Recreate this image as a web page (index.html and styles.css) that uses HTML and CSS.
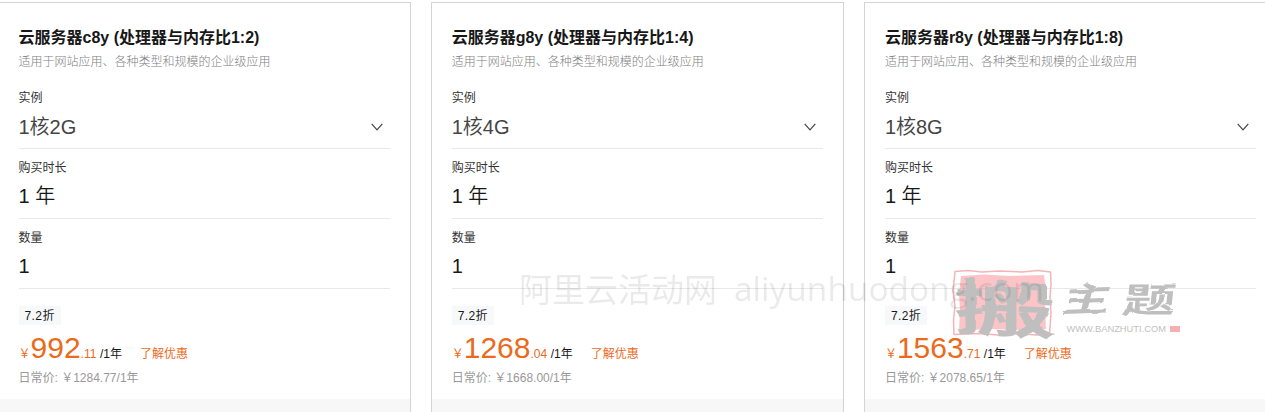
FILE: index.html
```html
<!DOCTYPE html>
<html lang="zh-CN">
<head>
<meta charset="utf-8">
<title>云服务器</title>
<link rel="stylesheet" href="styles.css">
</head>
<body>
<main class="cards">
  <section class="card">
    <div class="card-body">
      <h2 class="title">云服务器c8y (处理器与内存比1:2)</h2>
      <p class="desc">适用于网站应用、各种类型和规模的企业级应用</p>
      <div class="field"><span class="label">实例</span><div class="value select"><span>1核2G</span><svg class="chevron" viewBox="0 0 12 8"><path d="M.7 .8 6 6.8 11.3 .8"/></svg></div></div>
      <div class="field"><span class="label">购买时长</span><div class="value">1 年</div></div>
      <div class="field"><span class="label">数量</span><div class="value">1</div></div>
      <span class="tag">7.2折</span>
      <div class="price"><span class="money">￥<b class="amount">992</b>.11</span><span class="unit">/1年</span><a class="link">了解优惠</a></div>
      <div class="daily">日常价: ￥1284.77/1年</div>
    </div>
    <div class="card-foot"></div>
  </section>
  <section class="card">
    <div class="card-body">
      <h2 class="title">云服务器g8y (处理器与内存比1:4)</h2>
      <p class="desc">适用于网站应用、各种类型和规模的企业级应用</p>
      <div class="field"><span class="label">实例</span><div class="value select"><span>1核4G</span><svg class="chevron" viewBox="0 0 12 8"><path d="M.7 .8 6 6.8 11.3 .8"/></svg></div></div>
      <div class="field"><span class="label">购买时长</span><div class="value">1 年</div></div>
      <div class="field"><span class="label">数量</span><div class="value">1</div></div>
      <span class="tag">7.2折</span>
      <div class="price"><span class="money">￥<b class="amount">1268</b>.04</span><span class="unit">/1年</span><a class="link">了解优惠</a></div>
      <div class="daily">日常价: ￥1668.00/1年</div>
    </div>
    <div class="card-foot"></div>
  </section>
  <section class="card">
    <div class="card-body">
      <h2 class="title">云服务器r8y (处理器与内存比1:8)</h2>
      <p class="desc">适用于网站应用、各种类型和规模的企业级应用</p>
      <div class="field"><span class="label">实例</span><div class="value select"><span>1核8G</span><svg class="chevron" viewBox="0 0 12 8"><path d="M.7 .8 6 6.8 11.3 .8"/></svg></div></div>
      <div class="field"><span class="label">购买时长</span><div class="value">1 年</div></div>
      <div class="field"><span class="label">数量</span><div class="value">1</div></div>
      <span class="tag">7.2折</span>
      <div class="price"><span class="money">￥<b class="amount">1563</b>.71</span><span class="unit">/1年</span><a class="link">了解优惠</a></div>
      <div class="daily">日常价: ￥2078.65/1年</div>
    </div>
    <div class="card-foot"></div>
  </section>
</main>
<svg class="watermark" viewBox="0 0 1265 412">
  <defs>
    <filter id="rough" x="-10%" y="-10%" width="120%" height="120%">
      <feTurbulence type="fractalNoise" baseFrequency=".06" numOctaves="1" seed="4"/>
      <feDisplacementMap in="SourceGraphic" scale="5" xChannelSelector="R" yChannelSelector="G"/>
    </filter>
  </defs>
  <g class="wm-seal">
    <path class="seal-edge" d="M955 271.500 968 270.500 982 272 1000 271 1022 272 1038 270.500 1050.500 272 1051 284 1050 298 1051 313 1049.500 334 1037 335 1016 333.500 998 335 978 333.500 954 334.500 953.500 320 955 306 953 291Z"/>
    <path class="seal-fill" d="M961 276 984 274.500 1010 276 1044 275 1046 290 1045 306 1046 329 1020 330 990 329 959 330.500 960 311 959 294Z"/>
  </g>
  <g class="wm-brand">
    <g filter="url(#rough)">
      <text class="brush" transform="translate(954 329) skewY(3) scale(1.68 1)" font-size="61">搬</text>
      <text class="brush" transform="translate(1060 312) skewX(-14) skewY(-2) scale(1.4 1)" font-size="34">主</text>
      <text class="brush" transform="translate(1122 312) skewX(-6) scale(1.55 1)" font-size="34">题</text>
    </g>
    <text class="url" x="1066.500" y="332" font-size="9.300" textLength="99.500" lengthAdjust="spacingAndGlyphs">WWW.BANZHUTI.COM</text>
  </g>
  <rect class="wm-mark" x="1170" y="326" width="10" height="6"/>
  <g class="wm-site">
    <text x="519" y="302" font-size="33" textLength="198">阿里云活动网</text>
    <text x="734" y="301" font-size="32" textLength="310" lengthAdjust="spacingAndGlyphs">aliyunhuodong.com</text>
  </g>
</svg>
</body>
</html>
```

FILE: styles.css
```css
body {
  margin: 0;
  height: 412px;
  overflow: hidden;
  background: #fff;
  color: #181818;
  font: 12px/18px "Liberation Sans", "Noto Sans CJK SC", sans-serif;
}
.cards {
  display: grid;
  grid-template-columns: repeat(3, 413px);
  column-gap: 20.200px;
  width: 1280px;
  margin: 0 0 0 -2px;
  padding-top: 2px;
}
.card {
  box-sizing: border-box;
  height: 420px;
  border: 1px solid #d4d4d4;
}
.card-body {
  box-sizing: border-box;
  height: 396px;
  padding: 24px 20.500px 0 19.500px;
}
.title {
  margin: 0;
  font-size: 16px;
  line-height: 22px;
  font-weight: 700;
  white-space: nowrap;
}
.desc {
  margin: 0 0 7px;
  padding-top: 3px;
  line-height: 20px;
  color: #808080;
  font-weight: 300;
}
.field {
  box-sizing: border-box;
  height: 70px;
  padding-top: 10px;
  border-bottom: 1px solid #e8e8e8;
}
.label {
  display: block;
  line-height: 18px;
  color: #333;
}
.value {
  font-size: 20px;
  line-height: 30px;
  padding-top: 4px;
  font-weight: 350;
}
.select {
  display: flex;
  align-items: center;
  justify-content: space-between;
  padding-top: 5px;
  color: #444;
}
.chevron {
  width: 12px;
  height: 8px;
  margin: 0 7px 1px 0;
  fill: none;
  stroke: #444;
  stroke-width: 1.200;
}
.tag {
  display: block;
  box-sizing: border-box;
  width: 42px;
  height: 19px;
  margin: 17px 0 0 .5px;
  padding: 1px 0 0 5.500px;
  background: #f7f8fa;
  line-height: 19px;
  letter-spacing: .4px;
}
.price {
  display: flex;
  align-items: baseline;
  height: 34px;
  line-height: 34px;
  margin-top: 6px;
}
.money {
  color: #ec6a1c;
}
.amount {
  font-size: 30px;
  font-weight: 400;
}
.unit {
  margin-left: 3.500px;
}
.link {
  margin-left: 18px;
  color: #ec6a1c;
}
.daily {
  margin-top: 4px;
  line-height: 18px;
  color: #999;
}
.card-foot {
  height: 22px;
  background: #f7f7f7;
}
.watermark {
  position: absolute;
  left: 0;
  top: 0;
  width: 1265px;
  height: 412px;
  pointer-events: none;
}
.wm-site {
  fill: #000;
  opacity: .08;
  font-family: "Open Sans", "Noto Sans CJK SC", sans-serif;
  font-weight: 400;
}
.seal-edge {
  fill: none;
  stroke: #f3b5b8;
  stroke-width: 1.500;
  stroke-linejoin: round;
}
.seal-fill {
  fill: #fa7d83;
  opacity: .45;
}
.wm-brand {
  fill: #bfbfbf;
  font-family: "Noto Sans CJK SC", sans-serif;
}
.brush {
  font-weight: 700;
}
.url {
  font-family: "Liberation Sans", sans-serif;
}
.wm-mark {
  fill: #f5b0b4;
}
```
